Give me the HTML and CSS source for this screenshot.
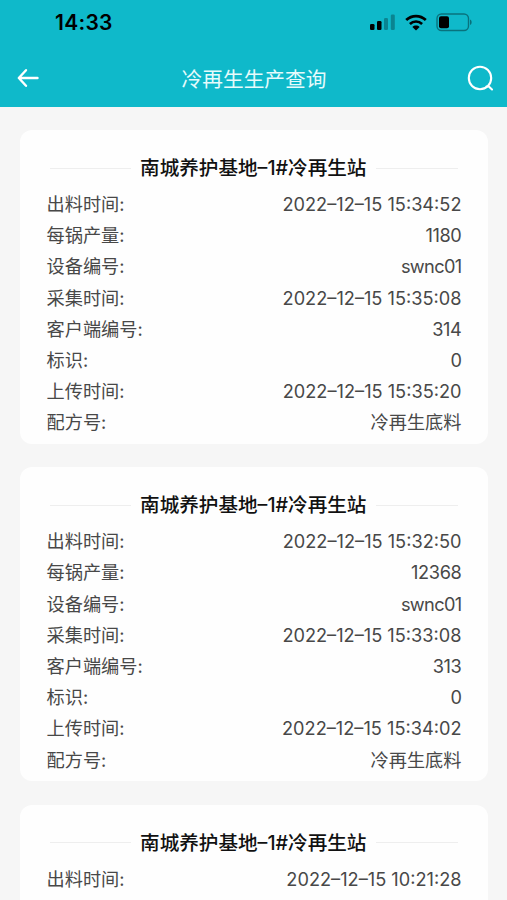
FILE: index.html
```html
<!DOCTYPE html>
<html lang="zh-CN">
<head>
<meta charset="utf-8">
<title>冷再生生产查询</title>
<link rel="stylesheet" href="styles.css">
</head>
<body>
<header class="top">
  <div class="status">
    <span class="clock">14:33</span>
    <div class="signals">
      <svg class="cell" width="26" height="17" viewBox="0 0 26 17"><rect x="1" y="10" width="4.5" height="6" rx="1.3"/><rect x="8" y="7" width="4.5" height="9" rx="1.3"/><g opacity=".28"><rect x="15" y="4" width="4" height="12" rx="1.3"/><rect x="21.8" y="0.5" width="4" height="15.5" rx="1.3"/></g></svg>
      <svg class="wifi" width="22" height="17" viewBox="0 0 22 17"><g fill="none" stroke="#000" stroke-width="2.7"><path d="M1.2 6.1C6.8.8 15.2.8 20.8 6.1"/><path d="M4.9 9.9c3.5-3.2 8.7-3.2 12.2 0"/></g><path d="M11 16.5l-3.6-3.6c2-1.8 5.2-1.8 7.2 0z"/></svg>
      <svg class="battery" width="37" height="19" viewBox="0 0 37 19"><rect x="1" y="1" width="31.5" height="16.5" rx="4.5" fill="none" stroke="#000" stroke-opacity=".38" stroke-width="1.4"/><rect x="3" y="3.2" width="10" height="12" rx="2"/><path d="M34 6.5c2.2.8 2.2 4.7 0 5.5z" opacity=".4"/></svg>
    </div>
  </div>
  <nav class="nav">
    <svg class="back" width="22" height="20" viewBox="0 0 22 20"><path d="M20.5 10H2M9 2.2L1.8 10 9 17.8"/></svg>
    <h1 class="heading">冷再生生产查询</h1>
    <svg class="search" width="28" height="28" viewBox="0 0 28 28"><circle cx="13" cy="13" r="11.2"/><path d="M19.5 21.5h2.3l3.2 3"/></svg>
  </nav>
</header>
<main class="list">
  <section class="card">
    <h2 class="title"><span>南城养护基地–1#冷再生站</span></h2>
    <dl class="rows">
      <div class="row"><dt>出料时间:</dt><dd>2022–12–15 15:34:52</dd></div>
      <div class="row"><dt>每锅产量:</dt><dd class="number">1180</dd></div>
      <div class="row"><dt>设备编号:</dt><dd class="code">swnc01</dd></div>
      <div class="row"><dt>采集时间:</dt><dd>2022–12–15 15:35:08</dd></div>
      <div class="row"><dt>客户端编号:</dt><dd class="number">314</dd></div>
      <div class="row"><dt>标识:</dt><dd class="number">0</dd></div>
      <div class="row"><dt>上传时间:</dt><dd>2022–12–15 15:35:20</dd></div>
      <div class="row"><dt>配方号:</dt><dd>冷再生底料</dd></div>
    </dl>
  </section>
  <section class="card">
    <h2 class="title"><span>南城养护基地–1#冷再生站</span></h2>
    <dl class="rows">
      <div class="row"><dt>出料时间:</dt><dd>2022–12–15 15:32:50</dd></div>
      <div class="row"><dt>每锅产量:</dt><dd class="number">12368</dd></div>
      <div class="row"><dt>设备编号:</dt><dd class="code">swnc01</dd></div>
      <div class="row"><dt>采集时间:</dt><dd>2022–12–15 15:33:08</dd></div>
      <div class="row"><dt>客户端编号:</dt><dd class="number">313</dd></div>
      <div class="row"><dt>标识:</dt><dd class="number">0</dd></div>
      <div class="row"><dt>上传时间:</dt><dd>2022–12–15 15:34:02</dd></div>
      <div class="row"><dt>配方号:</dt><dd>冷再生底料</dd></div>
    </dl>
  </section>
  <section class="card">
    <h2 class="title"><span>南城养护基地–1#冷再生站</span></h2>
    <dl class="rows">
      <div class="row"><dt>出料时间:</dt><dd>2022–12–15 10:21:28</dd></div>
    </dl>
  </section>
</main>
</body>
</html>
```
FILE: styles.css
```css
* { box-sizing: border-box; margin: 0; padding: 0; }
body {
  height: 900px;
  overflow: hidden;
  background: #f6f6f6;
  color: #484848;
  font-family: Inter, "Noto Sans CJK SC", sans-serif;
}
svg { display: block; }
.top { height: 106.5px; background: #0fb9ca; }
.status {
  height: 50px;
  padding: 0 34px 5px 55px;
  display: flex;
  align-items: center;
  justify-content: space-between;
}
.clock { color: #000; font-size: 21px; font-weight: 600; line-height: 26px; letter-spacing: .3px; }
.signals { display: flex; align-items: center; }
.wifi { margin-left: 10px; }
.battery { margin-left: 9px; }
.nav {
  height: 56px;
  padding: 1px 12px 0 17px;
  display: flex;
  align-items: center;
  justify-content: space-between;
}
.back, .search { fill: none; stroke: #fff; stroke-width: 2.4; stroke-linecap: round; stroke-linejoin: round; }
.back { margin-top: -1px; }
.search { stroke-width: 2.1; }
.heading { padding: 2px 0 0 2px; color: #e6fbfc; font-size: 20.7px; font-weight: 400; line-height: 30px; }
.list {
  height: 793.5px;
  overflow: hidden;
  padding: 23.5px 19px 0 20px;
  display: flex;
  flex-direction: column;
  gap: 23.3px;
}
.card {
  height: 314px;
  flex: none;
  padding: 0 26.5px;
  border-radius: 12px;
  background: #fefefe;
}
.title {
  height: 59px;
  padding: 17px 3.5px 0 3px;
  display: flex;
  align-items: flex-start;
  color: #111;
  font-size: 19.6px;
  font-weight: 500;
  line-height: 42px;
  white-space: nowrap;
}
.title::before, .title::after {
  content: "";
  flex: 1;
  height: 1px;
  margin-top: 20.5px;
  background: #eee;
}
.title::before { margin-right: 9px; }
.title::after { margin-left: 10px; }
.row {
  height: 31.2px;
  display: flex;
  justify-content: space-between;
  font-size: 18.2px;
  line-height: 31.2px;
  white-space: nowrap;
}
.number { letter-spacing: -.35px; }
.code { letter-spacing: -.65px; }
```
